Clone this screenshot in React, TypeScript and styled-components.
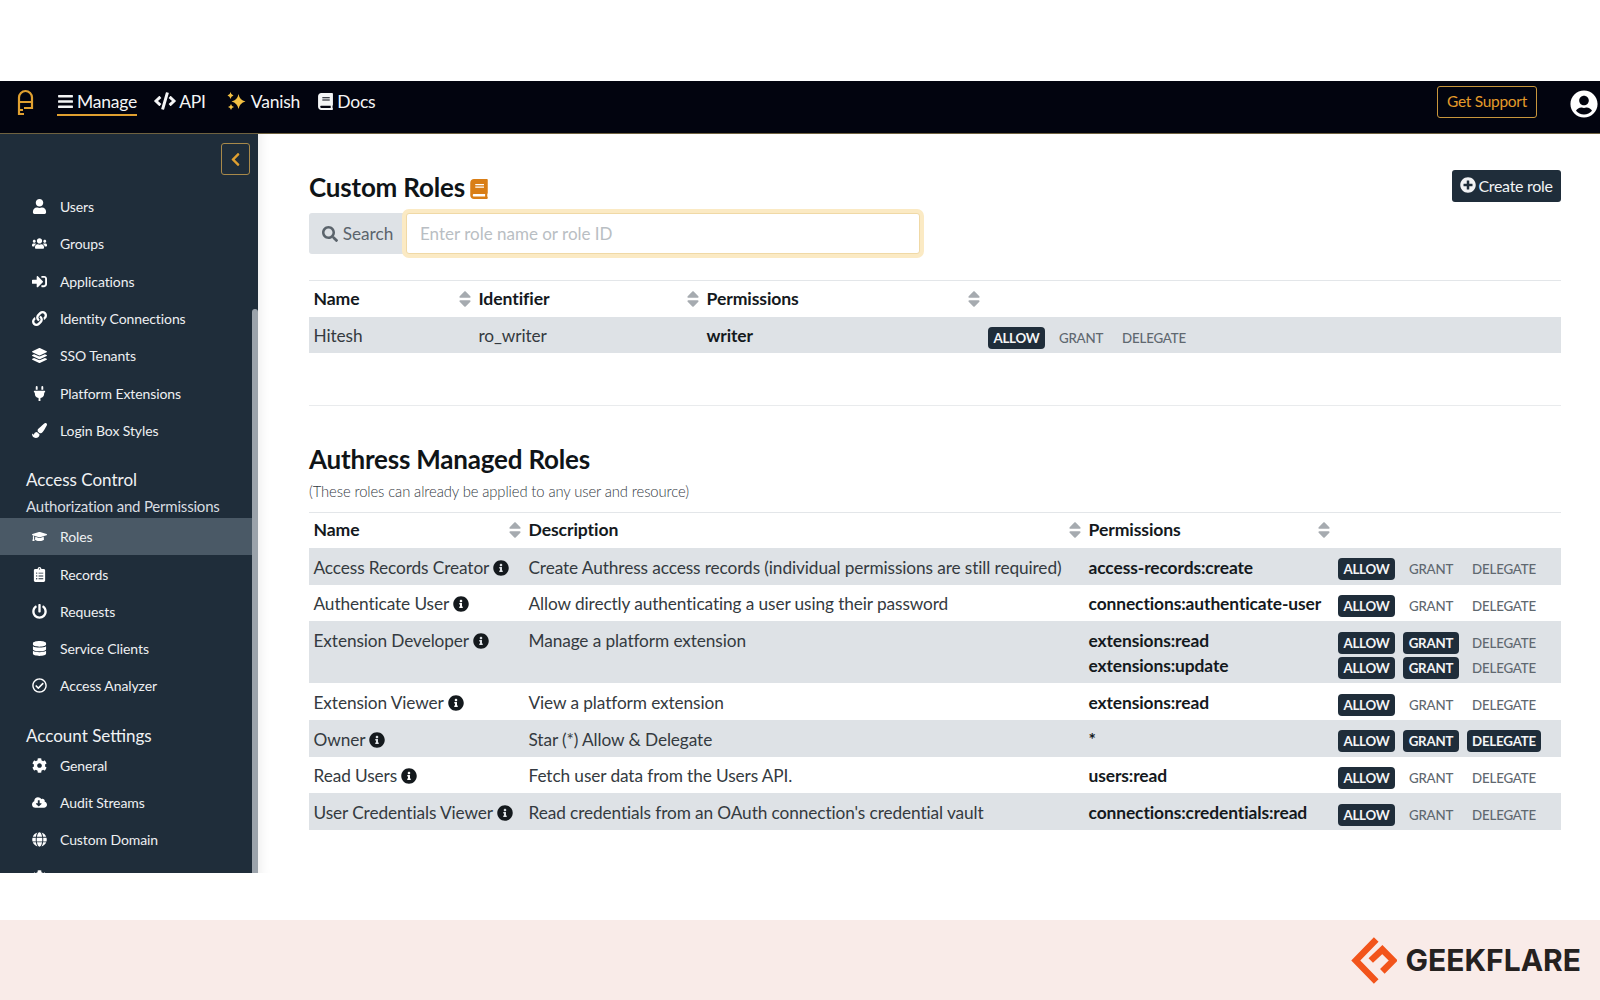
import React from "react";
import styled, { createGlobalStyle } from "styled-components";
import {
  FaBars, FaCode, FaBook, FaUserCircle, FaChevronLeft, FaUser, FaUsers, FaSignInAlt, FaLink,
  FaLayerGroup, FaPlug, FaPaintBrush, FaGraduationCap, FaClipboardList, FaPowerOff, FaDatabase,
  FaRegCheckCircle, FaCog, FaCloudDownloadAlt, FaGlobe, FaSearch, FaPlusCircle, FaInfoCircle, FaSort,
} from "react-icons/fa";

const Global = createGlobalStyle`
  html, body { margin: 0; padding: 0; background: #fff; }
  body { font-family: Lato, "Open Sans", sans-serif; }
  * { box-sizing: border-box; }
`;

const Page = styled.div`
  width: 1600px;
  height: 1000px;
  display: flex;
  flex-direction: column;
  overflow: hidden;
  padding-top: 81px;
`;

const TopBar = styled.header`
  height: 53px;
  flex: none;
  background: #02040f;
  border-bottom: 1px solid #6f6240;
  display: flex;
  align-items: flex-start;
  padding: 0 0 0 17px;
  color: #fff;
`;

const Logo = styled.svg`
  width: 18px;
  height: 27px;
  margin-top: 8px;
  flex: none;
`;

const NavItem = styled.a<{ $active?: boolean; $gap: number }>`
  display: flex;
  align-items: center;
  gap: 3px;
  height: 28px;
  margin-top: 7px;
  margin-left: ${(p) => p.$gap}px;
  font-size: 17.5px;
  letter-spacing: -0.2px;
  color: #f4f5f6;
  border-bottom: 2px solid ${(p) => (p.$active ? "#e0a030" : "transparent")};
  svg { flex: none; }
`;

const Sparkle = styled.svg`
  margin-right: 2px;
`;

const SupportButton = styled.a`
  margin-left: auto;
  margin-top: 5px;
  width: 100px;
  height: 32px;
  border: 1px solid #c8963c;
  border-radius: 3px;
  color: #e49b2a;
  font-size: 15.5px;
  letter-spacing: -0.3px;
  padding-bottom: 2px;
  display: flex;
  align-items: center;
  justify-content: center;
`;

const Avatar = styled.div`
  margin: 9px 2px 0 33px;
  display: flex;
  font-size: 28px;
  color: #fff;
`;

const Body = styled.div`
  height: 739px;
  flex: none;
  display: flex;
`;

const Sidebar = styled.aside`
  width: 258px;
  flex: none;
  background: #1f2d3a;
  position: relative;
  overflow: hidden;
  padding-top: 54px;
  color: #eef0f2;
`;

const ScrollThumb = styled.div`
  position: absolute;
  right: 0;
  top: 175px;
  bottom: 0;
  width: 6px;
  background: #9ba3ab;
  border-radius: 3px 3px 0 0;
`;

const CollapseButton = styled.button`
  position: absolute;
  top: 9px;
  left: 221px;
  width: 29px;
  height: 32px;
  background: transparent;
  border: 1px solid #a8894a;
  border-radius: 3px;
  color: #e0a030;
  display: flex;
  align-items: center;
  justify-content: center;
  padding: 0;
  font-size: 15px;
`;

const SideGroup = styled.div<{ $top?: number }>`
  margin-top: ${(p) => p.$top ?? 0}px;
`;

const SideItem = styled.div<{ $active?: boolean }>`
  height: 37.3px;
  width: 252px;
  display: flex;
  align-items: center;
  padding-left: 30px;
  font-size: 14px;
  letter-spacing: -0.1px;
  color: #eef0f2;
  background: ${(p) => (p.$active ? "#4a5966" : "transparent")};
`;

const SideIcon = styled.span`
  width: 18px;
  margin-right: 12px;
  display: flex;
  justify-content: center;
  font-size: 15px;
  color: #fff;
`;

const SideHeading = styled.div`
  padding-left: 26px;
  font-size: 17px;
  line-height: 22px;
  color: #f0f2f4;
`;

const SideSub = styled.div`
  padding-left: 26px;
  font-size: 15px;
  line-height: 20px;
  letter-spacing: -0.2px;
  margin-top: 5px;
  margin-bottom: 2px;
  color: #d9dde1;
`;

const Main = styled.main`
  flex: 1;
  padding: 35px 39px 0 51px;
  color: #212529;
  box-shadow: inset 12px 0 12px -10px rgba(0, 0, 0, 0.08);
  min-width: 0;
`;

const HeadRow = styled.div`
  display: flex;
  justify-content: space-between;
  align-items: flex-start;
  height: 44px;
`;

const Title = styled.h2`
  margin: 0;
  font-size: 26px;
  line-height: 36px;
  font-weight: 700;
  letter-spacing: -0.2px;
  color: #0f1417;
  display: flex;
  align-items: center;
  gap: 4px;
  svg { color: #d97e16; font-size: 20px; margin-top: 3px; }
`;

const CreateButton = styled.button`
  width: 109px;
  height: 32px;
  margin-top: 1px;
  background: #1f2d3a;
  color: #f2f3f5;
  border: 0;
  border-radius: 3px;
  font-family: inherit;
  font-size: 16px;
  letter-spacing: -0.3px;
  display: flex;
  align-items: center;
  justify-content: center;
  gap: 2px;
  padding: 0 0 2px;
`;

const SearchRow = styled.div`
  display: flex;
  height: 41px;
  width: 611px;
`;

const SearchAddon = styled.div`
  width: 97px;
  flex: none;
  background: #dee2e6;
  border-radius: 3px 0 0 3px;
  color: #5b646c;
  font-size: 17.2px;
  display: flex;
  align-items: center;
  justify-content: center;
  gap: 5px;
  svg { font-size: 16px; }
`;

const SearchInput = styled.input`
  flex: 1;
  border: 1px solid #f0d9a6;
  box-shadow: 0 0 0 4px #fbeac4;
  border-radius: 3px;
  padding: 0 13px;
  font-family: inherit;
  font-size: 17px;
  outline: none;
  background: #fff;
  &::placeholder { color: #b9bec3; opacity: 1; }
`;

const Table = styled.table<{ $top: number }>`
  width: 100%;
  margin-top: ${(p) => p.$top}px;
  border-collapse: collapse;
  table-layout: fixed;
  font-size: 17.25px;
  letter-spacing: -0.1px;
`;

const HeaderRow = styled.tr`
  height: 36px;
  border-top: 1px solid #e3e6e9;
`;

const Th = styled.th`
  padding: 0 5px 1px 4.5px;
  text-align: left;
  font-weight: 700;
  font-size: 17.6px;
  position: relative;
  color: #14191d;
`;

const SortMark = styled.span`
  position: absolute;
  right: -1px;
  top: 50%;
  margin-top: -10px;
  display: flex;
  font-size: 20px;
  color: #a6abb0;
`;

const Row = styled.tr`
  &:nth-child(odd) { background: #dee2e6; }
`;

const Td = styled.td<{ $strong?: boolean }>`
  padding: 6.5px 5px 4.5px 4.5px;
  vertical-align: top;
  line-height: 25.6px;
  color: ${(p) => (p.$strong ? "#14191d" : "#343a40")};
  font-weight: ${(p) => (p.$strong ? 700 : 400)};
  font-size: ${(p) => (p.$strong ? "17.4px" : "inherit")};
  white-space: nowrap;
`;

const ActionCell = styled.td`
  padding: 6.5px 0 4.5px 5px;
  vertical-align: top;
`;

const BadgeLine = styled.div`
  display: flex;
  height: 25.6px;
  align-items: center;
  gap: 8px;
  padding-top: 4px;
`;

const Badge = styled.span<{ $on?: boolean; $w: number }>`
  width: ${(p) => p.$w}px;
  height: 22px;
  flex: none;
  border-radius: 4px;
  font-size: 13.3px;
  letter-spacing: -0.2px;
  display: flex;
  align-items: center;
  justify-content: center;
  font-weight: ${(p) => (p.$on ? 700 : 500)};
  background: ${(p) => (p.$on ? "#1f2d3a" : "transparent")};
  color: ${(p) => (p.$on ? "#f4f5f6" : "#5f6870")};
`;

const Info = styled.span`
  display: inline-flex;
  margin-left: 4px;
  vertical-align: -2px;
  font-size: 16px;
  color: #14191d;
`;

const Divider = styled.hr`
  border: 0;
  border-top: 1px solid #e9ebed;
  margin: 51.5px 0 0;
`;

const Title2 = styled(Title)`
  margin-top: 35px;
`;

const Note = styled.p`
  margin: 3px 0 0;
  font-size: 14.8px;
  line-height: 22px;
  font-weight: 300;
  letter-spacing: -0.1px;
  color: #33393f;
`;

const Footer = styled.footer`
  margin-top: 47px;
  height: 80px;
  flex: none;
  background: #f9ebe8;
  display: flex;
  align-items: center;
  justify-content: flex-end;
  padding: 0 19px 0 0;
  gap: 9px;
`;

const BrandName = styled.span`
  font-family: Inter, sans-serif;
  font-weight: 700;
  font-size: 30px;
  letter-spacing: 0;
  color: #25211f;
`;

type Level = 0 | 1 | 2;

const Actions = ({ level }: { level: Level }) => (
  <BadgeLine>
    <Badge $on $w={57}>ALLOW</Badge>
    <Badge $on={level >= 1} $w={56}>GRANT</Badge>
    <Badge $on={level >= 2} $w={74}>DELEGATE</Badge>
  </BadgeLine>
);

const topGroup = [
  [FaUser, "Users"], [FaUsers, "Groups"], [FaSignInAlt, "Applications"], [FaLink, "Identity Connections"],
  [FaLayerGroup, "SSO Tenants"], [FaPlug, "Platform Extensions"], [FaPaintBrush, "Login Box Styles"],
] as const;
const accessGroup = [
  [FaGraduationCap, "Roles"], [FaClipboardList, "Records"], [FaPowerOff, "Requests"],
  [FaDatabase, "Service Clients"], [FaRegCheckCircle, "Access Analyzer"],
] as const;
const settingsGroup = [
  [FaCog, "General"], [FaCloudDownloadAlt, "Audit Streams"], [FaGlobe, "Custom Domain"], [FaCog, ""],
] as const;

const managed: { name: string; desc: string; perms: [string, Level][] }[] = [
  { name: "Access Records Creator", desc: "Create Authress access records (individual permissions are still required)", perms: [["access-records:create", 0]] },
  { name: "Authenticate User", desc: "Allow directly authenticating a user using their password", perms: [["connections:authenticate-user", 0]] },
  { name: "Extension Developer", desc: "Manage a platform extension", perms: [["extensions:read", 1], ["extensions:update", 1]] },
  { name: "Extension Viewer", desc: "View a platform extension", perms: [["extensions:read", 0]] },
  { name: "Owner", desc: "Star (*) Allow & Delegate", perms: [["*", 2]] },
  { name: "Read Users", desc: "Fetch user data from the Users API.", perms: [["users:read", 0]] },
  { name: "User Credentials Viewer", desc: "Read credentials from an OAuth connection's credential vault", perms: [["connections:credentials:read", 0]] },
];

const SideList = ({ items, activeLabel }: { items: readonly (readonly [React.ComponentType, string])[]; activeLabel?: string }) => (
  <>
    {items.map(([Icon, label], i) => (
      <SideItem key={i} $active={label === activeLabel}>
        <SideIcon><Icon /></SideIcon>
        {label}
      </SideItem>
    ))}
  </>
);

export default function App() {
  return (
    <Page>
      <Global />
      <TopBar>
        <Logo viewBox="0 0 18 27" fill="none" stroke="#e0a030" strokeWidth="2.2">
          <path d="M2 26V8.5a6.5 6.5 0 0 1 13 0V20" />
          <path d="M2 13h13M15 19H7" />
          <path d="M2 21h4M2 25h5" />
        </Logo>
        <NavItem $active $gap={22}><FaBars size={17} />Manage</NavItem>
        <NavItem $gap={17}><FaCode size={22} />API</NavItem>
        <NavItem $gap={20}>
          <Sparkle width="20" height="20" viewBox="0 0 20 20" fill="#f2c043">
            <path d="M12.5 3Q13.5 9 19.5 10.5 13.5 12 12.5 18 11.5 12 5.5 10.5 11.5 9 12.5 3z" />
            <path d="M4.5 1Q5 4 7.5 4.5 5 5 4.5 8 4 5 1.5 4.5 4 4 4.5 1zM5 13Q5.5 15.5 8 16 5.5 16.5 5 19 4.5 16.5 2 16 4.5 15.5 5 13z" />
          </Sparkle>
          Vanish
        </NavItem>
        <NavItem $gap={17}><FaBook size={17} />Docs</NavItem>
        <SupportButton>Get Support</SupportButton>
        <Avatar><FaUserCircle /></Avatar>
      </TopBar>
      <Body>
        <Sidebar>
          <CollapseButton aria-label="Collapse"><FaChevronLeft /></CollapseButton>
          <ScrollThumb />
          <SideGroup><SideList items={topGroup} /></SideGroup>
          <SideGroup $top={20}>
            <SideHeading>Access Control</SideHeading>
            <SideSub>Authorization and Permissions</SideSub>
            <SideList items={accessGroup} activeLabel="Roles" />
          </SideGroup>
          <SideGroup $top={20}>
            <SideHeading>Account Settings</SideHeading>
            <SideList items={settingsGroup} />
          </SideGroup>
        </Sidebar>
        <Main>
          <HeadRow>
            <Title>Custom Roles <FaBook /></Title>
            <CreateButton><FaPlusCircle size={16} />Create role</CreateButton>
          </HeadRow>
          <SearchRow>
            <SearchAddon><FaSearch />Search</SearchAddon>
            <SearchInput placeholder="Enter role name or role ID" />
          </SearchRow>
          <Table $top={26}>
            <colgroup>
              <col style={{ width: 165 }} /><col style={{ width: 228 }} /><col style={{ width: 281 }} /><col />
            </colgroup>
            <thead>
              <HeaderRow>
                <Th>Name<SortMark><FaSort /></SortMark></Th>
                <Th>Identifier<SortMark><FaSort /></SortMark></Th>
                <Th>Permissions<SortMark><FaSort /></SortMark></Th>
                <Th />
              </HeaderRow>
            </thead>
            <tbody>
              <Row>
                <Td>Hitesh</Td>
                <Td>ro_writer</Td>
                <Td $strong>writer</Td>
                <ActionCell><Actions level={0} /></ActionCell>
              </Row>
            </tbody>
          </Table>
          <Divider />
          <Title2>Authress Managed Roles</Title2>
          <Note>(These roles can already be applied to any user and resource)</Note>
          <Table $top={10}>
            <colgroup>
              <col style={{ width: 215 }} /><col style={{ width: 560 }} /><col style={{ width: 249 }} /><col />
            </colgroup>
            <thead>
              <HeaderRow>
                <Th>Name<SortMark><FaSort /></SortMark></Th>
                <Th>Description<SortMark><FaSort /></SortMark></Th>
                <Th>Permissions<SortMark><FaSort /></SortMark></Th>
                <Th />
              </HeaderRow>
            </thead>
            <tbody>
              {managed.map((r) => (
                <Row key={r.name}>
                  <Td>{r.name}<Info><FaInfoCircle /></Info></Td>
                  <Td>{r.desc}</Td>
                  <Td $strong>{r.perms.map(([p]) => <div key={p}>{p}</div>)}</Td>
                  <ActionCell>{r.perms.map(([p, l]) => <Actions key={p} level={l} />)}</ActionCell>
                </Row>
              ))}
            </tbody>
          </Table>
        </Main>
      </Body>
      <Footer>
        <svg width="46" height="47" viewBox="0 0 135 138" fill="none" stroke="#f2541b" strokeWidth="19">
          <path d="M74 7L14 69l60 62" />
          <path d="M58 69l34-32 32 32-32 32" />
        </svg>
        <BrandName>GEEKFLARE</BrandName>
      </Footer>
    </Page>
  );
}
